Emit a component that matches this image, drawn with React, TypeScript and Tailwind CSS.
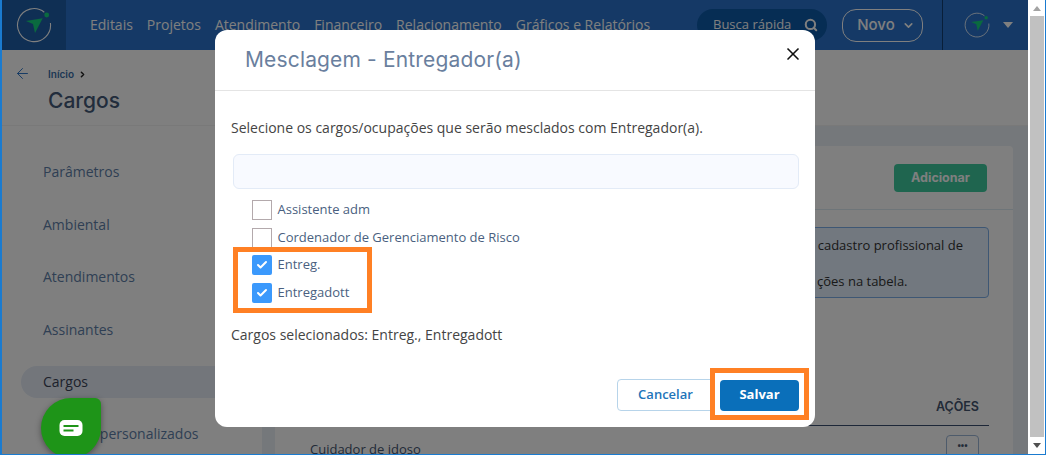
import { ArrowLeft, ChevronDown, ChevronRight, Search, X, Check } from "lucide-react";

const sans = "font-['Open_Sans',sans-serif]";
const head = "font-['Inter',sans-serif]";

function Logo({ size }: { size: number }) {
  return (
    <svg width={size} height={size} viewBox="0 0 36 36" fill="none">
      <path d="M28.3 5.2A16.5 16.5 0 1 0 34.4 16" stroke="#fff" strokeWidth="1.1" />
      <circle cx="30.7" cy="8" r="2.4" fill="#14d47e" />
      <path d="M10 14 26.7 11.3 19 26 17 17Z" fill="#14d47e" />
    </svg>
  );
}

function Box({ checked }: { checked?: boolean }) {
  return checked ? (
    <span className="flex h-5 w-5 items-center justify-center rounded-[2px] bg-[#3b99fc]">
      <Check size={12} strokeWidth={4} className="text-white" />
    </span>
  ) : (
    <span className="h-5 w-5 border border-[#b3a9ac] bg-white" />
  );
}

const nav = ["Editais", "Projetos", "Atendimento", "Financeiro", "Relacionamento", "Gráficos e Relatórios"];
const side = ["Parâmetros", "Ambiental", "Atendimentos", "Assinantes", "Cargos", "Campos personalizados"];

export default function App() {
  return (
    <div className={`relative flex h-[455px] w-[1046px] overflow-hidden border-b border-l-2 border-r border-[#1a7bd0] bg-white ${sans}`}>
      <div className="relative flex h-full w-[1026px] flex-col bg-white">
        <header className="flex h-[50px] shrink-0 items-center bg-[#2a73cc]">
          <div className="flex h-full w-[64px] items-center justify-center bg-[#1f5fa8]">
            <Logo size={36} />
          </div>
          <nav className="-mt-px ml-6 flex gap-[14px] text-[14px] text-white">
            {nav.map((n) => (
              <span key={n}>{n}</span>
            ))}
          </nav>
          <div className="ml-auto flex h-full items-center">
            <div className="flex h-8 w-[130px] items-center justify-between rounded-full bg-[#0d5aa8] pl-4 pr-[9px] text-[13px] text-white">
              <span>Busca rápida</span>
              <Search size={14} strokeWidth={3.5} />
            </div>
            <div className={`ml-[15px] flex h-[33px] w-[81px] items-center justify-center gap-[7px] rounded-[14px] border border-white pl-[7px] text-[15px] font-medium text-white ${head}`}>
              Novo <ChevronDown size={13} strokeWidth={3} />
            </div>
            <div className="ml-[19px] flex h-full w-[86px] items-center border-l border-[#123f73] pl-[21px]">
              <Logo size={26} />
              <span className="ml-[13px] h-0 w-0 border-x-[5px] border-t-[6px] border-x-transparent border-t-white" />
            </div>
          </div>
        </header>
        <div className="flex h-[76px] shrink-0 flex-col border-b border-[#f2f2f2] pl-[12px] pt-[15px]">
          <div className="flex h-4 items-center">
            <ArrowLeft size={17} strokeWidth={1.4} className="text-[#2f76c9]" />
            <span className={`ml-[17px] mt-[3px] text-[10px] font-semibold text-[#3a6fa8] ${head}`}>Início</span>
            <ChevronRight size={9} strokeWidth={4} className="ml-1 mt-[2px] text-[#222]" />
          </div>
          <h1 className={`ml-[34px] mt-[6px] text-[21px] font-medium leading-7 text-[#455a78] ${head}`}>Cargos</h1>
        </div>
        <div className="flex min-h-0 flex-1">
          <aside className="flex w-[260px] shrink-0 flex-col gap-[24.45px] pl-[19px] pt-[32.2px] text-[14px] leading-7 text-[#5e7ea8]">
            {side.map((s) => (
              <div key={s} className={s === "Cargos" ? "-my-[2px] flex h-8 items-center rounded-l-full bg-[#e6edf7] pl-[22px] text-[#3b4357]" : "whitespace-nowrap pl-[22px]"}>
                {s}
              </div>
            ))}
          </aside>
          <main className="min-w-0 flex-1 bg-[#eaf0f7] pl-[13px] pt-[20px]">
            <div className="h-[330px] w-[738px] rounded-t bg-white">
              <div className="flex h-[64px] items-start justify-end border-b border-[#dcebf2] pr-[26px] pt-[18px]">
                <button className={`h-7 w-[93px] rounded bg-[#3ecb9f] text-[12.5px] font-bold text-white ${head}`}>Adicionar</button>
              </div>
              <div className="ml-[10px] mt-[17px] flex h-[71px] w-[704px] flex-col items-end justify-center gap-5 rounded border border-[#7daee8] bg-[#e5f1ff] pr-[25px] text-[13px] leading-4 text-[#333]">
                <span>cadastro profissional de</span>
                <span className="w-[146px]">ções na tabela.</span>
              </div>
              <div className="ml-[10px] mt-[81px] flex h-[47px] w-[704px] items-end justify-end border-b border-[#3b4f70] pb-[8px] pr-[10px]">
                <span className={`text-[12.5px] font-semibold text-[#44546f] ${head}`}>AÇÕES</span>
              </div>
              <div className="ml-[35px] flex h-8 w-[669px] items-center justify-between pt-[16px] text-[13px] text-[#44546f]">
                <span>Cuidador de idoso</span>
                <span className="mt-[2px] flex h-8 w-[33px] items-start justify-center rounded border border-[#9cb6d6] pt-1 text-[9px] font-bold leading-3">•••</span>
              </div>
            </div>
          </main>
        </div>
        <div className="absolute inset-0 bg-black/50" />
      </div>

      <div className="flex w-[17px] flex-col items-center bg-white pl-[1px]">
        <span className="mt-[6px] h-0 w-0 border-x-[4px] border-b-[5px] border-x-transparent border-b-[#a3a3a3]" />
        <span className="mt-[5px] w-[14px] flex-1 bg-[#c1c1c1]" />
        <span className="mb-[6px] mt-[6px] h-0 w-0 border-x-[4px] border-t-[5px] border-x-transparent border-t-[#505050]" />
      </div>

      {/* Bot bubble */}
      <div className="absolute left-[39px] top-[398px] flex h-[60px] w-[60px] items-center justify-center rounded-[50%_6px_50%_50%] bg-[#1e9418] shadow-[0_2px_6px_rgba(0,0,0,0.4)]">
        <svg width="24" height="18" viewBox="0 0 24 18">
          <rect x="0.5" y="1" width="23" height="16" rx="5" fill="#fff" />
          <rect x="4.5" y="6" width="15" height="2" fill="#1e9418" />
          <rect x="4.5" y="10.5" width="10" height="2" fill="#1e9418" />
        </svg>
      </div>

      {/* Modal */}
      <div className="absolute left-[213px] top-[30px] flex h-[397px] w-[600px] flex-col rounded-xl bg-white">
        <div className="relative flex h-[61px] shrink-0 items-center border-b border-[#e4e4e4] pl-[30px]">
          <h2 className={`whitespace-nowrap text-[21px] font-normal tracking-[0.15px] text-[#6a7f9e] ${head}`}>Mesclagem - Entregador(a)</h2>
          <X size={20} strokeWidth={2} className="absolute right-[12px] top-[14px] text-[#111]" />
        </div>
        <div className="flex flex-1 flex-col px-4 pt-[27px]">
          <p className="text-[14px] leading-5 text-[#444]">Selecione os cargos/ocupações que serão mesclados com Entregador(a).</p>
          <div className="ml-[2px] mt-[16px] h-[35px] w-[566px] rounded-md border border-[#e3ebf7] bg-[#f8faff]" />
          <div className="relative mt-[11px] flex flex-col gap-[7.5px] pl-[21px] text-[13px] text-[#4a5f80]">
            {[
              ["Assistente adm", false],
              ["Cordenador de Gerenciamento de Risco", false],
              ["Entreg.", true],
              ["Entregadott", true],
            ].map(([label, on]) => (
              <label key={label as string} className="flex h-5 items-center gap-[5.5px]">
                <Box checked={on as boolean} />
                <span>{label as string}</span>
              </label>
            ))}
            <div className="absolute left-[2px] top-[47px] h-[66px] w-[139px] border-[5px] border-[#ff8024]" />
          </div>
          <p className="mt-[22.5px] text-[14px] leading-5 text-[#444]">Cargos selecionados: Entreg., Entregadott</p>
          <div className="relative mt-[34px] flex justify-end gap-[6px]">
            <button className="h-8 w-[97px] rounded border border-[#b7d4ea] bg-white text-[13px] font-semibold text-[#2274b9]">Cancelar</button>
            <button className="h-[31px] w-[79px] self-center rounded bg-[#0a6fba] text-[13px] font-bold text-white">Salvar</button>
            <div className="absolute right-[-10px] top-[-11px] h-[52px] w-[99px] border-[5px] border-[#ff8024]" />
          </div>
        </div>
      </div>
    </div>
  );
}
